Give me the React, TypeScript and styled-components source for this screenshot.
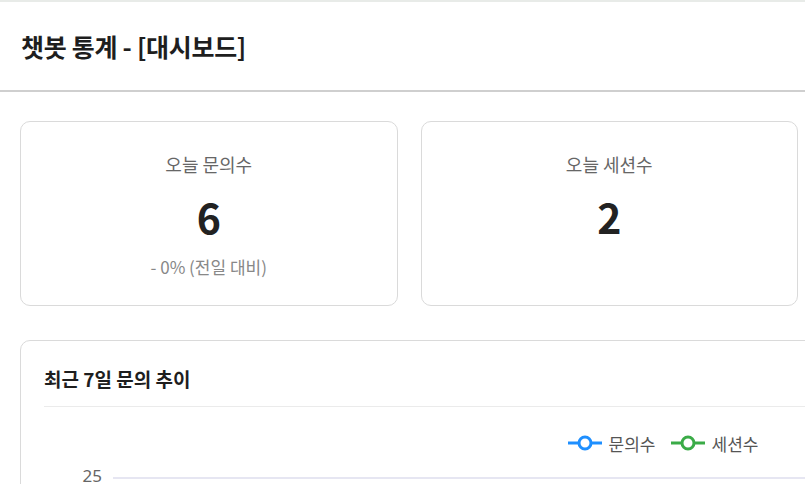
import styled, { createGlobalStyle } from 'styled-components';

const GlobalStyle = createGlobalStyle`
  html, body {
    margin: 0;
    padding: 0;
    background: #fff;
    overflow: hidden;
  }

  body {
    font-family: "Noto Sans CJK KR", "Noto Sans", sans-serif;
    color: #222;
  }
`;

const Page = styled.div`
  width: 805px;
  min-height: 484px;
`;

const Header = styled.header`
  height: 88px;
  display: flex;
  align-items: center;
  padding: 0 21px;
  border-top: 2px solid #e8ebe8;
  border-bottom: 2px solid #cfcfcf;
  background: #fff;
`;

const Title = styled.h1`
  margin: 0;
  font-size: 25px;
  font-weight: 700;
  color: #1e1e1e;
  letter-spacing: -0.3px;
`;

const Main = styled.main`
  padding: 29px 0 0 20px;
  display: flex;
  flex-direction: column;
  gap: 34px;
`;

const StatGrid = styled.div`
  width: 778px;
  display: grid;
  grid-template-columns: repeat(2, 1fr);
  gap: 23px;
`;

const StatCard = styled.section`
  height: 185px;
  box-sizing: border-box;
  border: 1px solid #dadada;
  border-radius: 10px;
  padding: 29px 16px 0;
  display: flex;
  flex-direction: column;
  align-items: center;
  background: #fff;
`;

const StatLabel = styled.div`
  font-size: 18px;
  line-height: 26px;
  color: #666;
`;

const StatValue = styled.div`
  margin-top: 15px;
  font-size: 41px;
  line-height: 48px;
  font-weight: 700;
  color: #222;
`;

const StatDiff = styled.div`
  margin-top: 15px;
  font-size: 17px;
  line-height: 24px;
  color: #888;
`;

const ChartCard = styled.section`
  width: 1286px;
  box-sizing: border-box;
  border: 1px solid #dadada;
  border-radius: 10px;
  padding: 24px 23px 24px;
  background: #fff;
`;

const ChartTitle = styled.h2`
  margin: 0;
  padding-bottom: 13px;
  font-size: 19px;
  line-height: 28px;
  font-weight: 700;
  color: #1e1e1e;
  border-bottom: 1px solid #ebebeb;
`;

const Legend = styled.div`
  display: flex;
  justify-content: center;
  gap: 15px;
  margin-top: 24px;
  height: 24px;
  align-items: center;
`;

const LegendItem = styled.div`
  display: flex;
  align-items: center;
  gap: 7px;
  font-size: 17px;
  color: #555;
`;

const ChartSvg = styled.svg`
  display: block;
  width: 100%;
`;

function LegendMark({ colour }: { colour: string }) {
  return (
    <svg width="34" height="16" viewBox="0 0 34 16">
      <line x1="0" y1="8" x2="34" y2="8" stroke={colour} strokeWidth="3" />
      <circle cx="17" cy="8" r="6" fill="#fff" stroke={colour} strokeWidth="3" />
    </svg>
  );
}

const series = [
  { name: '문의수', colour: '#1e8fff' },
  { name: '세션수', colour: '#3aab47' },
];

const ticks = [25, 20, 15, 10, 5, 0];

export default function App() {
  return (
    <Page>
      <GlobalStyle />
      <Header>
        <Title>챗봇 통계 - [대시보드]</Title>
      </Header>
      <Main>
        <StatGrid>
          <StatCard>
            <StatLabel>오늘 문의수</StatLabel>
            <StatValue>6</StatValue>
            <StatDiff>- 0% (전일 대비)</StatDiff>
          </StatCard>
          <StatCard>
            <StatLabel>오늘 세션수</StatLabel>
            <StatValue>2</StatValue>
          </StatCard>
        </StatGrid>
        <ChartCard>
          <ChartTitle>최근 7일 문의 추이</ChartTitle>
          <Legend>
            {series.map((s) => (
              <LegendItem key={s.name}>
                <LegendMark colour={s.colour} />
                {s.name}
              </LegendItem>
            ))}
          </Legend>
          <ChartSvg height="300" viewBox="0 0 1238 300" preserveAspectRatio="xMinYMin meet">
            {ticks.map((t, i) => {
              const y = 23 + i * 52;
              return (
                <g key={t}>
                  <text
                    x="58"
                    y={y + 4}
                    textAnchor="end"
                    fontSize="17"
                    fill="#666"
                    fontFamily='"Noto Sans", sans-serif'
                  >
                    {t}
                  </text>
                  <line x1="69" y1={y} x2="1238" y2={y} stroke="#e6e6f2" strokeWidth="2" />
                </g>
              );
            })}
          </ChartSvg>
        </ChartCard>
      </Main>
    </Page>
  );
}
